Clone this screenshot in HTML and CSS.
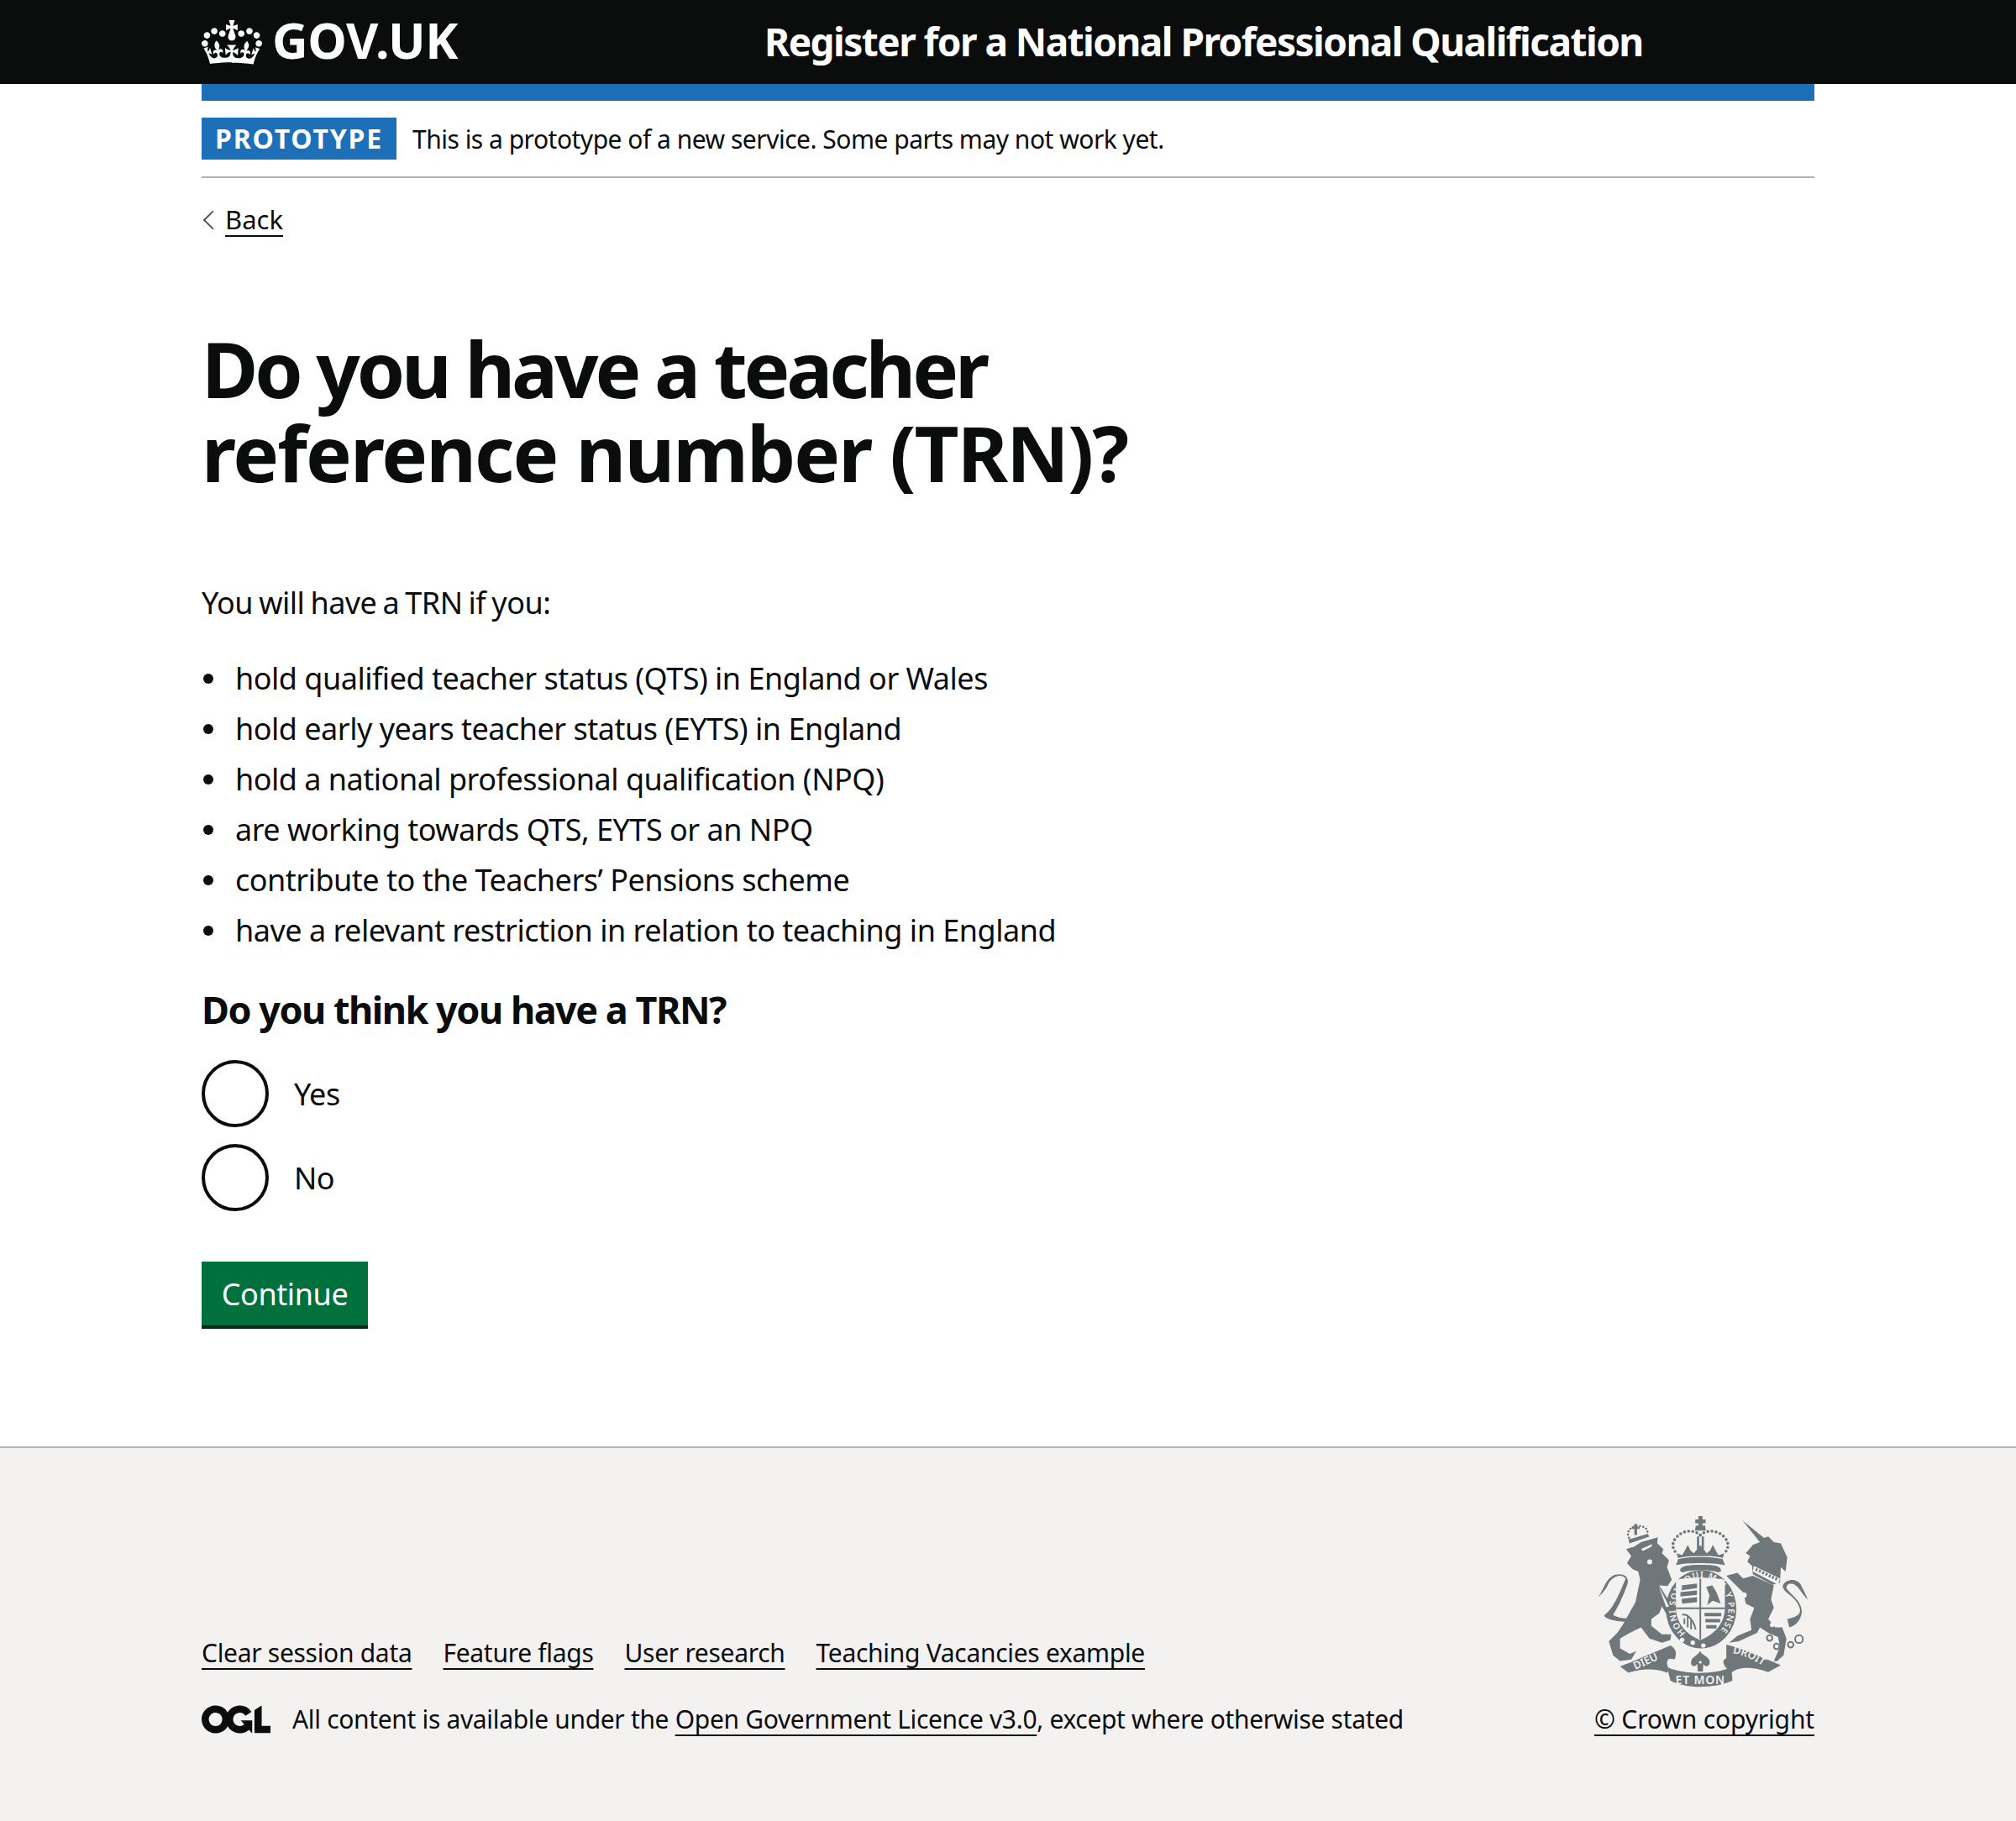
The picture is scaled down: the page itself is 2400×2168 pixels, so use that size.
FILE: index.html
```html
<!DOCTYPE html>
<html lang="en">
<head>
    <meta charset="UTF-8">
    <title>Do you have a teacher reference number (TRN)?</title>
    <link rel="stylesheet" href="styles.css">
</head>
<body>
    <header class="site-header">
        <div class="site-header-inner">
            <a class="logo" href="#">
                <svg class="logo-crown" viewBox="0 0 132 97" width="72" height="53">
                    <path fill="currentColor" fill-rule="evenodd" d="M25 30.2c3.5 1.5 7.7-.2 9.1-3.7 1.5-3.6-.2-7.8-3.9-9.2-3.6-1.4-7.6.3-9.1 3.9-1.4 3.5.3 7.5 3.9 9zM9 39.5c3.6 1.5 7.8-.2 9.2-3.7 1.5-3.6-.2-7.8-3.9-9.1-3.6-1.5-7.6.2-9.1 3.8-1.4 3.5.3 7.5 3.8 9zM4.4 57.2c3.5 1.5 7.7-.2 9.1-3.8 1.5-3.6-.2-7.7-3.9-9.1-3.5-1.5-7.6.3-9.1 3.8-1.4 3.5.3 7.6 3.9 9.1zm38.3-21.4c3.5 1.5 7.7-.2 9.1-3.8 1.5-3.6-.2-7.7-3.9-9.1-3.6-1.5-7.6.3-9.1 3.8-1.3 3.6.4 7.7 3.9 9.1zm64.4-5.6c-3.6 1.5-7.8-.2-9.1-3.7-1.5-3.6.2-7.8 3.8-9.2 3.6-1.4 7.7.3 9.2 3.9 1.3 3.5-.4 7.5-3.9 9zm15.9 9.3c-3.6 1.5-7.7-.2-9.1-3.7-1.5-3.6.2-7.8 3.7-9.1 3.6-1.5 7.7.2 9.2 3.8 1.5 3.5-.3 7.5-3.8 9zm4.7 17.7c-3.6 1.5-7.8-.2-9.2-3.8-1.5-3.6.2-7.7 3.9-9.1 3.6-1.5 7.7.3 9.2 3.8 1.3 3.5-.4 7.6-3.9 9.1zM89.3 35.8c-3.6 1.5-7.8-.2-9.2-3.8-1.4-3.6.2-7.7 3.9-9.1 3.6-1.5 7.7.3 9.2 3.8 1.4 3.6-.3 7.7-3.9 9.1zM69.7 17.7l8.9 4.7V9.3l-8.9 2.8c-.2-.3-.5-.6-.9-.9L72.4 0H59.6l3.5 11.2c-.3.3-.6.5-.9.9l-8.8-2.8v13.1l8.8-4.7c.3.3.6.7.9.9l-5 15.4v.1c-.2.8-.4 1.6-.4 2.4 0 4.1 3.1 7.5 7 8.1h.2c.3 0 .7.1 1 .1.4 0 .7 0 1-.1h.2c4-.6 7.1-4.1 7.1-8.1 0-.8-.1-1.7-.4-2.4V34l-5.1-15.4c.4-.2.7-.6 1-.9zM66 92.8c16.9 0 32.8 1.1 47.1 3.2 4-16.9 8.9-26.7 14-33.5l-9.6-3.4c1 4.9 1.1 7.2 0 10.2-1.5-1.4-3-4.3-4.2-8.7L108.6 76c2.8-2 5-3.2 7.5-3.3-4.4 9.4-10 11.9-13.6 11.2-4.3-.8-6.3-4.6-5.6-7.9 1-4.7 5.7-5.9 8-.5 4.3-8.7-3-11.4-7.6-8.8 7.1-7.2 7.9-13.5 2.1-21.1-8 6.1-8.1 12.3-4.5 20.8-4.7-5.4-12.1-2.5-9.5 6.2 3.4-5.2 7.9-2 7.2 3.1-.6 4.3-6.4 7.8-13.5 7.2-10.3-.9-10.9-8-11.2-13 2.5-.5 7.1 1.8 11 7.3L80.2 60c-4.1 4.4-8 5.3-12.3 5.4 1.4-4.4 8-11.6 8-11.6H55.5s6.4 7.2 7.9 11.6c-4.2-.1-8-1-12.3-5.4l1.4 16.4c3.9-5.5 8.5-7.7 10.9-7.3-.3 5-.7 12.1-11 13-7.2.6-12.9-2.9-13.5-7.2-.7-5 3.8-8.3 7.1-3.1 2.7-8.7-4.6-11.6-9.4-6.2 3.7-8.5 3.6-14.7-4.6-20.8-5.8 7.6-5 13.9 2.2 21.1-4.7-2.6-11.9.1-7.7 8.8 2.3-5.5 7.1-4.2 8.1.5.7 3.3-1.3 7.1-5.7 7.9-3.5.7-9-1.8-13.5-11.2 2.5.1 4.7 1.3 7.5 3.3l-4.7-15.4c-1.2 4.4-2.7 7.2-4.3 8.7-1.1-3-.9-5.3 0-10.2l-9.5 3.4c5 6.9 9.9 16.7 14 33.5 14.8-2.1 30.8-3.2 47.7-3.2z"></path>
                </svg>
                <span class="logo-text">GOV.UK</span>
            </a>
            <a class="service-name" href="#">Register for a National Professional Qualification</a>
        </div>
    </header>

    <div class="page-width">
        <div class="header-bar"></div>
        <div class="phase-banner">
            <strong class="phase-tag">Prototype</strong>
            <span class="phase-text">This is a prototype of a new service. Some parts may not work yet.</span>
        </div>

        <a class="back-link" href="#">Back</a>

        <main class="main">
            <h1 class="heading-xl"><span class="heading-line-one">Do you have a teacher</span><br>reference number (TRN)?</h1>
            <p class="body-text">You will have a TRN if you:</p>
            <ul class="bullets">
                <li>hold qualified teacher status (QTS) in England or Wales</li>
                <li>hold early years teacher status (EYTS) in England</li>
                <li>hold a national professional qualification (NPQ)</li>
                <li>are working towards QTS, EYTS or an NPQ</li>
                <li>contribute to the Teachers’ Pensions scheme</li>
                <li>have a relevant restriction in relation to teaching in England</li>
            </ul>
            <form>
                <h2 class="heading-m">Do you think you have a TRN?</h2>
                <div class="radios">
                    <label class="radio"><span class="radio-circle"></span><span class="radio-label">Yes</span></label>
                    <label class="radio"><span class="radio-circle"></span><span class="radio-label">No</span></label>
                </div>
                <button class="button" type="button">Continue</button>
            </form>
        </main>
    </div>

    <footer class="footer">
        <div class="footer-inner">
            <div class="footer-meta">
                <ul class="footer-links">
                    <li><a href="#">Clear session data</a></li>
                    <li><a href="#">Feature flags</a></li>
                    <li><a href="#">User research</a></li>
                    <li><a href="#">Teaching Vacancies example</a></li>
                </ul>
                <div class="licence">
                    <svg class="ogl" viewBox="0 0 483.2 195.7" width="82" height="34">
                        <path fill="currentColor" d="M421.5 142.8V.1l-50.7 32.3v161.1h112.4v-50.7zm-122.3-9.6A47.12 47.12 0 0 1 221 97.8c0-26 21.1-47.1 47.1-47.1 16.7 0 31.4 8.7 39.7 21.8l42.7-27.2A97.63 97.63 0 0 0 268.1 0c-36.5 0-68.3 20.1-85.1 49.7A98 98 0 0 0 97.8 0C43.9 0 0 43.9 0 97.8s43.9 97.8 97.8 97.8c36.5 0 68.3-20.1 85.1-49.7a97.76 97.76 0 0 0 149.6 25.4l19.4 22.2h3v-87.8h-80l24.3 27.5zM97.8 145c-26 0-47.1-21.1-47.1-47.1s21.1-47.1 47.1-47.1 47.2 21 47.2 47S123.8 145 97.8 145"></path>
                    </svg>
                    <span>All content is available under the <a href="#">Open Government Licence v3.0</a>, except where otherwise stated</span>
                </div>
            </div>
            <div class="copyright">
                <svg class="crest" viewBox="70 70 760 620" width="253" height="207">
                    <g fill="#6f777a">
                        <!-- lion -->
                        <path d="M172 190L200 182L225 165L285 148L283 170L305 190L300 205L325 230L318 255L335 300L320 322L290 320L338 395L345 425L320 430L300 395L290 420L262 440L262 465L300 495L333 495L330 515L300 525L255 510L225 470L185 490L150 510L150 545L185 565L208 555L190 585L150 590L125 570L110 520L140 490L160 460L205 380L222 300L215 270L195 262L175 240L190 215Z"/>
                        <path d="M172 450C130 450 85 435 95 425C125 405 150 345 170 295C150 275 125 290 110 310C100 335 85 350 72 362C95 325 100 295 130 282C160 275 180 285 178 310C160 365 135 410 125 425C140 435 160 438 175 438Z"/>
                        <path d="M180 156L250 135L254 146L184 170Z"/>
                        <path d="M201 100H211V110H220V118H211V140H201V118H192V110H201Z"/>
                        <!-- unicorn -->
                        <path d="M588 88L665 150L680 145L700 165L725 170L748 220L742 270L725 255L722 310L695 318L625 280L622 250L605 235L615 215L600 205L625 175L650 165Z"/>
                        <path d="M625 285L700 320L690 370L700 400L680 440L705 470L730 470L745 510L735 570L710 592L700 590L722 540L715 505L680 490L650 470L640 490L575 520L540 525L570 500L620 480L615 440L630 400L600 385L590 345L555 310L530 285L570 275L590 295Z"/>
                        <path d="M748 440C790 430 805 420 785 385C765 350 730 345 732 320C745 295 780 295 795 315C805 335 815 355 822 372C800 350 790 325 770 315C750 310 745 320 745 330C760 355 795 370 800 410C800 440 780 465 755 470Z"/>
                        <!-- crown -->
                        <path d="M430 72H445V84H456V98H445V106H454L457 124H418L421 106H430V98H419V84H430Z"/>
                        <path d="M425 145H433V190H425ZM442 145H450V190H442Z"/>
                        <path d="M358 222L352 205L372 212L382 195L392 175L402 195L414 205L437 176L460 205L472 195L482 175L492 195L502 212L523 205L517 222C490 212 385 212 358 222Z"/>
                        <path d="M358 226C395 216 480 216 517 226L525 248C500 238 375 238 350 248Z"/>
                        <path d="M366 270C362 255 375 246 437 246C500 246 514 255 510 270L500 273C470 262 405 262 376 273Z"/>
                        <!-- garter -->
                        <ellipse cx="440" cy="405" rx="126" ry="140"/>
                        <!-- motto -->
                        <path d="M150 610C205 590 270 560 330 535C350 545 355 565 345 585C320 575 310 590 325 620L318 632C260 610 205 625 180 632Z"/>
                        <path d="M318 612C380 640 490 640 548 612L552 660C490 690 380 690 330 660Z"/>
                        <path d="M530 532C590 545 660 580 725 605L680 630C640 615 580 605 548 632C520 610 510 590 530 580Z"/>
                        <path d="M436 555C448 575 475 575 470 600C465 612 452 612 448 600L446 628H428L426 600C420 612 408 612 404 600C402 575 425 575 436 555Z"/>
                    </g>
                    <g fill="none" stroke="#6f777a" stroke-width="11" stroke-linecap="round" stroke-dasharray="0 15">
                        <path d="M437 140C415 120 375 120 350 150C332 172 338 190 354 208"/>
                        <path d="M437 140C460 120 500 120 525 150C543 172 537 190 521 208"/>
                    </g>
                    <path fill="none" stroke="#6f777a" stroke-width="8" stroke-linecap="round" stroke-dasharray="0 12" d="M182 150C170 125 190 112 206 108C225 105 250 112 248 132"/>
                    <g fill="#f3f2f1">
                        <path d="M350 300C400 290 470 290 525 300V400C525 460 480 500 437 515C395 500 350 460 350 400Z"/>
                        <circle cx="372" cy="515" r="8"/>
                        <circle cx="410" cy="525" r="8"/>
                        <circle cx="448" cy="535" r="8"/>
                        <circle cx="598" cy="272" r="10"/>
                        <circle cx="593" cy="355" r="10"/>
                        <circle cx="725" cy="378" r="10"/>
                        <circle cx="716" cy="425" r="8"/>
                        <circle cx="694" cy="461" r="8"/>
                        <circle cx="437" cy="595" r="5"/>
                        <circle cx="256" cy="236" r="9"/>
                        <path d="M628 250L722 295L715 318L625 270Z"/>
                        <path d="M225 190L265 172L262 182L232 197ZM288 322L325 395L315 398Z"/>
                    </g>
                    <g fill="none" stroke="#6f777a" stroke-width="6">
                        <path d="M437 296V512M350 402H525"/>
                        <circle cx="685" cy="508" r="10"/>
                        <circle cx="710" cy="538" r="10"/>
                        <circle cx="760" cy="532" r="10"/>
                        <circle cx="790" cy="512" r="14"/>
                        <path d="M635 262L715 300" stroke-width="10" stroke-dasharray="7 6"/>
                        <path d="M372 425C395 420 415 450 420 478M380 438V458M392 432V470M404 440V478"/>
                    </g>
                    <g fill="#6f777a">
                        <path d="M370 320L425 313V330L370 337ZM366 344L425 338V354L366 360ZM370 368L425 362V380L372 385Z"/>
                        <path d="M458 325L480 320L495 345L510 385L482 375L462 390L470 355Z"/>
                        <path d="M452 418H512V430H452ZM455 440H508V452H455ZM458 462H495V474H458Z"/>
                    </g>
                    <g fill="#f3f2f1" class="crest-text">
                        <path id="garter-arc" d="M385 490A95 110 0 1 1 500 490" fill="none"/>
                        <text font-size="31"><textPath href="#garter-arc" textLength="505">HONI SOIT QUI MAL Y PENSE</textPath></text>
                        <path id="dieu-arc" d="M205 622C240 605 280 590 325 565" fill="none"/>
                        <text font-size="38"><textPath href="#dieu-arc">DIEU</textPath></text>
                        <text x="348" y="672" font-size="42" textLength="176">ET MON</text>
                        <path id="droit-arc" d="M552 562C595 570 640 590 680 622" fill="none"/>
                        <text font-size="38"><textPath href="#droit-arc">DROIT</textPath></text>
                    </g>
                </svg>
                <a href="#">© Crown copyright</a>
            </div>
        </div>
    </footer>
</body>
</html>
```

FILE: styles.css
```css
* {
    box-sizing: border-box;
}
body {
    margin: 0;
    font-family: "Noto Sans", Arial, sans-serif;
    color: #0b0c0c;
    background: #fff;
}
a {
    color: #0b0c0c;
    text-decoration-thickness: 2px;
    text-decoration-skip-ink: none;
    text-underline-offset: 7px;
}
.site-header {
    background: #0b0c0c;
    height: 100px;
}
.site-header-inner {
    display: flex;
    align-items: center;
    height: 100px;
    margin: 0 240px;
}
.logo {
    display: flex;
    align-items: center;
    width: 670px;
    color: #fff;
    text-decoration: none;
}
.logo-crown {
    margin-right: 12px;
}
.logo-text {
    margin-bottom: 6px;
    font-size: 59px;
    font-weight: 700;
    letter-spacing: -0.4px;
}
.service-name {
    margin-bottom: 3px;
    color: #fff;
    font-size: 46px;
    font-weight: 700;
    text-decoration: none;
    letter-spacing: -1.55px;
}
.page-width {
    margin: 0 240px;
}
.header-bar {
    height: 20px;
    background: #1d70b8;
}
.phase-banner {
    display: flex;
    align-items: center;
    padding: 20px 0;
    border-bottom: 2px solid #b1b4b6;
}
.phase-tag {
    display: block;
    width: 232px;
    height: 50px;
    margin-right: 19px;
    background: #1d70b8;
    color: #fff;
    font-size: 32px;
    line-height: 50px;
    text-align: center;
    text-transform: uppercase;
    letter-spacing: 1.8px;
}
.phase-text {
    font-size: 30px;
    letter-spacing: -0.5px;
}
.back-link {
    display: inline-block;
    position: relative;
    margin-top: 29px;
    padding-left: 28px;
    font-size: 31px;
    line-height: 40px;
    letter-spacing: 0;
}
.back-link:before {
    content: '';
    position: absolute;
    left: 5px;
    top: 13px;
    width: 14px;
    height: 14px;
    border-left: 2px solid #505a5f;
    border-bottom: 2px solid #505a5f;
    transform: rotate(45deg);
}
.main {
    padding-top: 108px;
}
.heading-xl {
    margin: 0 0 104px;
    font-size: 92px;
    line-height: 100px;
    font-weight: 700;
    letter-spacing: -1.95px;
}
.heading-line-one {
    letter-spacing: -4.15px;
}
.body-text {
    margin: 0 0 40px;
    font-size: 36px;
    line-height: 50px;
    letter-spacing: -0.5px;
    word-spacing: -1.8px;
}
.bullets {
    margin: 0 0 39px;
    padding: 0;
    list-style: none;
    font-size: 36px;
    line-height: 50px;
    letter-spacing: -0.5px;
}
.bullets li {
    display: flex;
    align-items: center;
    margin-bottom: 10px;
}
.bullets li:before {
    content: '';
    width: 12px;
    height: 12px;
    margin: 0 26px 0 2px;
    border-radius: 50%;
    background: #0b0c0c;
}
.heading-m {
    margin: 0 0 30px;
    font-size: 45px;
    line-height: 60px;
    font-weight: 700;
    letter-spacing: -1.5px;
}
.radio {
    display: flex;
    align-items: center;
    height: 80px;
    margin-bottom: 20px;
}
.radio-circle {
    width: 80px;
    height: 80px;
    border: 4px solid #0b0c0c;
    border-radius: 50%;
    background: #fff;
}
.radio-label {
    margin-left: 30px;
    font-size: 36px;
    letter-spacing: -0.5px;
}
.button {
    display: block;
    width: 198px;
    height: 80px;
    margin: 60px 0 0;
    padding: 0;
    border: 0;
    border-bottom: 4px solid #002d18;
    background: #00703c;
    color: #fff;
    font-family: inherit;
    font-size: 36px;
    letter-spacing: -0.4px;
}
.footer {
    margin-top: 140px;
    height: 446px;
    border-top: 2px solid #b1b4b6;
    background: #f3f2f1;
}
.footer-inner {
    display: flex;
    justify-content: space-between;
    align-items: flex-end;
    margin: 0 240px;
    padding-top: 80px;
}
.footer-links {
    display: flex;
    gap: 37px;
    margin: 0 0 39px;
    padding: 0;
    list-style: none;
    font-size: 30px;
    line-height: 40px;
    letter-spacing: -0.3px;
}
.licence {
    display: flex;
    align-items: center;
    gap: 26px;
    font-size: 30px;
    line-height: 40px;
    letter-spacing: -0.33px;
}
.copyright {
    display: flex;
    flex-direction: column;
    align-items: flex-end;
    font-size: 30px;
    line-height: 40px;
    letter-spacing: -0.15px;
}
.crest {
    margin: 0 5px 16px 0;
}
.crest-text {
    font-family: "Noto Sans", Arial, sans-serif;
    font-weight: 600;
    letter-spacing: 0;
}
```
